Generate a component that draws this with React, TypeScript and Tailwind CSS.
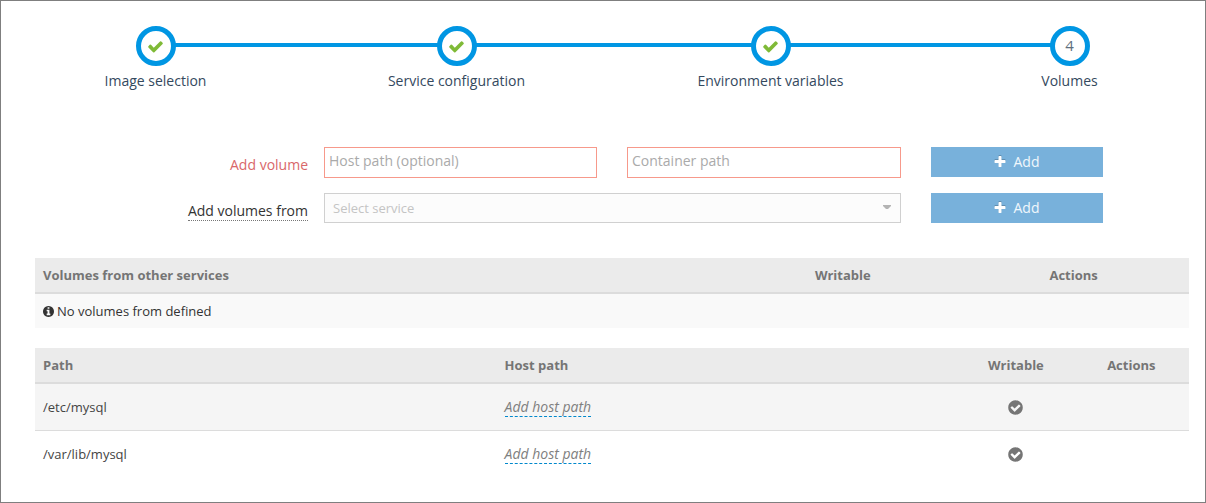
import type { ReactNode } from "react";

const CHECK =
  "M1671 566q0 40-28 68l-724 724-136 136q-28 28-68 28t-68-28l-136-136-362-362q-28-28-28-68t28-68l136-136q28-28 68-28t68 28l294 295 656-657q28-28 68-28t68 28l136 136q28 28 28 68z";
const PLUS =
  "M1600 736v192q0 40-28 68t-68 28h-416v416q0 40-28 68t-68 28h-192q-40 0-68-28t-28-68v-416h-416q-40 0-68-28t-28-68v-192q0-40 28-68t68-28h416v-416q0-40 28-68t68-28h192q40 0 68 28t28 68v416h416q40 0 68 28t28 68z";
const CHECK_CIRCLE =
  "M1412 734q0-28-18-46l-91-90q-19-19-45-19t-45 19l-408 407-226-226q-19-19-45-19t-45 19l-91 90q-18 18-18 46 0 27 18 45l362 362q19 19 45 19 27 0 46-19l543-543q18-18 18-45zm252 162q0 209-103 385.5t-279.5 279.5-385.5 103-385.5-103-279.5-279.5-103-385.5 103-385.5 279.5-279.5 385.5-103 385.5 103 279.5 279.5 103 385.5z";
const INFO_CIRCLE =
  "M1152 1376v-160q0-14-9-23t-23-9h-96v-512q0-14-9-23t-23-9h-320q-14 0-23 9t-9 23v160q0 14 9 23t23 9h96v320h-96q-14 0-23 9t-9 23v160q0 14 9 23t23 9h448q14 0 23-9t9-23zm-128-896v-160q0-14-9-23t-23-9h-192q-14 0-23 9t-9 23v160q0 14 9 23t23 9h192q14 0 23-9t9-23zm640 416q0 209-103 385.5t-279.5 279.5-385.5 103-385.5-103-279.5-279.5-103-385.5 103-385.5 279.5-279.5 385.5-103 385.5 103 279.5 279.5 103 385.5z";

interface IconProps {
  path: string;
  className: string;
  viewBox?: string;
}

function Icon({ path, className, viewBox = "0 0 1792 1792" }: IconProps) {
  return (
    <svg viewBox={viewBox} fill="currentColor" aria-hidden="true" className={className}>
      <path d={path} />
    </svg>
  );
}

const steps = [
  { label: "Image selection", done: true },
  { label: "Service configuration", done: true },
  { label: "Environment variables", done: true },
  { label: "Volumes", done: false },
];

function Stepper() {
  return (
    <ol className="grid grid-cols-[309fr_293fr_335fr_263fr] pr-1">
      {steps.map((step, i) => (
        <li key={step.label} className="flex flex-col items-center">
          <div className="flex w-full items-start">
            <span className={i === 0 ? "flex-1" : "mt-[17px] h-1 flex-1 bg-[#0096e3]"} />
            <span className="-mx-px flex size-10 items-center justify-center rounded-full border-5 border-[#0096e3] bg-white text-[15px] text-[#5f6f7e]">
              {step.done ? <Icon path={CHECK} className="size-[17px] text-[#7fba37]" /> : i + 1}
            </span>
            <span
              className={i === steps.length - 1 ? "flex-1" : "mt-[17px] h-1 flex-1 bg-[#0096e3]"}
            />
          </div>
          <span className="mt-[5px] leading-5 whitespace-nowrap text-[#34495e]">{step.label}</span>
        </li>
      ))}
    </ol>
  );
}

function AddButton() {
  return (
    <button
      type="button"
      className="flex h-[30px] items-center justify-center gap-[7px] bg-[#78b1db] pr-0.5 text-[#f0f7fc]"
    >
      <Icon path={PLUS} className="size-[14px] text-white drop-shadow-[0_-1px_0_rgba(0,0,0,0.2)]" />
      Add
    </button>
  );
}

const inputClass =
  "h-[31px] w-full min-w-0 border border-[#f7998b] bg-white px-1 pb-1 text-[#333] outline-none placeholder:text-[#aaa]";

function VolumeForm() {
  return (
    <form className="grid grid-cols-[273fr_779fr] gap-x-4 gap-y-[15px] pr-[102px] pl-[34px]">
      <label htmlFor="host-path" className="pt-2 text-right leading-5 text-[#d9676a]">
        Add volume
      </label>
      <div className="grid grid-cols-[273fr_274fr_172fr] gap-x-[30px]">
        <input id="host-path" type="text" placeholder="Host path (optional)" className={inputClass} />
        <input
          type="text"
          aria-label="Container path"
          placeholder="Container path"
          className={inputClass}
        />
        <AddButton />
      </div>
      <div className="pt-2 text-right">
        <label
          htmlFor="service"
          className="inline-block border-b border-dotted border-[#777] leading-[19px] text-[#333]"
        >
          Add volumes from
        </label>
      </div>
      <div className="grid grid-cols-[273fr_274fr_172fr] gap-x-[30px]">
        <div className="relative col-span-2">
          <select
            id="service"
            className="h-[30px] w-full appearance-none border border-[#d0d0d0] bg-[#fcfcfc] px-2 text-[13px] text-[#c4c4c4] outline-none"
          >
            <option>Select service</option>
          </select>
          <svg
            viewBox="0 0 8 4"
            aria-hidden="true"
            className="pointer-events-none absolute top-3 right-[10px] h-1 w-2 fill-[#b4b4b4]"
          >
            <path d="M0 0h8v1L5 4H3L0 1z" />
          </svg>
        </div>
        <AddButton />
      </div>
    </form>
  );
}

function Th({ className, children }: { className: string; children: ReactNode }) {
  return (
    <th scope="col" className={`border-b-2 border-[#dcdcdc] px-2 py-2 font-bold ${className}`}>
      {children}
    </th>
  );
}

function ServiceVolumes() {
  return (
    <table className="w-full table-fixed border-separate border-spacing-0 text-[13px] leading-[18px]">
      <thead className="bg-[#ebebeb] text-[#757575]">
        <tr>
          <Th className="w-3/5 text-left">Volumes from other services</Th>
          <Th className="w-1/5 text-center">Writable</Th>
          <Th className="w-1/5 text-center">Actions</Th>
        </tr>
      </thead>
      <tbody className="bg-[#f9f9f9] text-[#333]">
        <tr>
          <td colSpan={3} className="px-2 py-2">
            <span className="flex items-center gap-[3px]">
              <Icon path={INFO_CIRCLE} viewBox="128 128 1536 1536" className="size-[11px]" />
              No volumes from defined
            </span>
          </td>
        </tr>
      </tbody>
    </table>
  );
}

const paths = ["/etc/mysql", "/var/lib/mysql"];

function PathVolumes() {
  return (
    <table className="w-full table-fixed border-separate border-spacing-0 text-[13px] leading-[18px]">
      <thead className="bg-[#ebebeb] text-[#757575]">
        <tr>
          <Th className="w-2/5 text-left">Path</Th>
          <Th className="w-2/5 text-left">Host path</Th>
          <Th className="w-1/10 text-center">Writable</Th>
          <Th className="w-1/10 text-center">Actions</Th>
        </tr>
      </thead>
      <tbody className="text-[#444]">
        {paths.map((path) => (
          <tr
            key={path}
            className="h-[47px] last:h-[46px] odd:bg-[#f5f5f5] [&:not(:last-child)>td]:border-b [&:not(:last-child)>td]:border-[#dcdcdc]"
          >
            <td className="px-2">{path}</td>
            <td className="px-2">
              <a
                href="#host-path"
                className="inline-block border-b border-dashed border-[#0088cc] text-sm leading-[18px] text-[#808080] italic"
              >
                Add host path
              </a>
            </td>
            <td className="px-2">
              <Icon path={CHECK_CIRCLE} className="mx-auto size-[17px] text-[#757575]" />
            </td>
            <td />
          </tr>
        ))}
      </tbody>
    </table>
  );
}

export default function App() {
  return (
    <main className="border border-[#7f7f7f] bg-white pt-[25px] pb-[25px] font-['Open_Sans',sans-serif] text-sm">
      <Stepper />
      <div className="mt-14">
        <VolumeForm />
      </div>
      <div className="mt-[35px] flex flex-col gap-5 pr-4 pl-[34px]">
        <ServiceVolumes />
        <PathVolumes />
      </div>
    </main>
  );
}
